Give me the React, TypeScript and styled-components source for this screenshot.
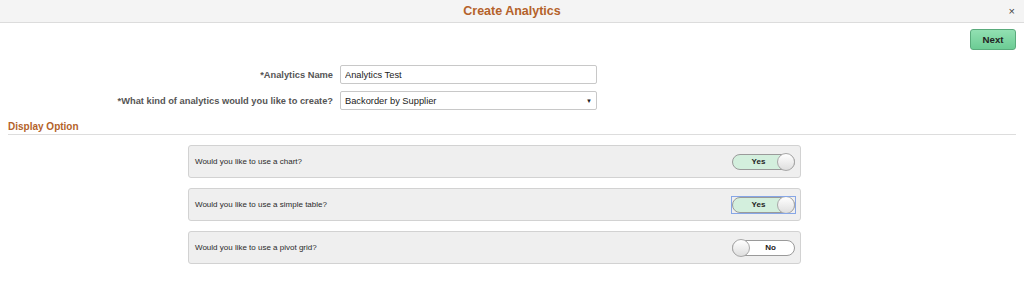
import React from 'react'
import styled, { createGlobalStyle } from 'styled-components'

const GlobalStyle = createGlobalStyle`
  body {
    margin: 0;
    background: #fff;
    font-family: "Liberation Sans", Arial, sans-serif;
    color: #333;
  }
`

interface Option {
  question: string
  on: boolean
  focused?: boolean
}

const options: Option[] = [
  { question: 'Would you like to use a chart?', on: true },
  { question: 'Would you like to use a simple table?', on: true, focused: true },
  { question: 'Would you like to use a pivot grid?', on: false },
]

export default function App() {
  return (
    <StyledRoot>
      <GlobalStyle />
      <StyledHeader>
        <span />
        <StyledTitle>Create Analytics</StyledTitle>
        <StyledClose>×</StyledClose>
      </StyledHeader>

      <StyledToolbar>
        <StyledNext>Next</StyledNext>
      </StyledToolbar>

      <StyledForm>
        <StyledLabel>*Analytics Name</StyledLabel>
        <StyledInput defaultValue="Analytics Test" />
        <StyledLabel>*What kind of analytics would you like to create?</StyledLabel>
        <StyledSelect>
          <span>Backorder by Supplier</span>
          <StyledCaret>▼</StyledCaret>
        </StyledSelect>
      </StyledForm>

      <StyledSection>Display Option</StyledSection>

      <StyledOptions>
        {options.map((o) => (
          <StyledOption key={o.question}>
            <span>{o.question}</span>
            <StyledFocus $focused={o.focused}>
              <StyledToggle $on={o.on}>
                <StyledToggleText $on={o.on}>{o.on ? 'Yes' : 'No'}</StyledToggleText>
                <StyledKnob />
              </StyledToggle>
            </StyledFocus>
          </StyledOption>
        ))}
      </StyledOptions>
    </StyledRoot>
  )
}

const StyledRoot = styled.div`
  width: 1024px;
  height: 288px;
  overflow: hidden;
`

const StyledHeader = styled.header`
  display: grid;
  grid-template-columns: 1fr auto 1fr;
  align-items: center;
  height: 22px;
  background: #f4f4f4;
  border-bottom: 1px solid #dcdcdc;
`

const StyledTitle = styled.h1`
  margin: 0;
  font-size: 12.5px;
  font-weight: bold;
  color: #b4622a;
`

const StyledClose = styled.span`
  justify-self: end;
  margin-right: 9px;
  font-size: 11px;
  color: #444;
`

const StyledToolbar = styled.div`
  display: flex;
  justify-content: flex-end;
  padding: 6px 8px 0;
`

const StyledNext = styled.button`
  width: 46px;
  height: 21px;
  padding: 0;
  border: 1px solid #5aab7c;
  border-radius: 3px;
  background: linear-gradient(#92e0b2, #6ccc94);
  font-family: inherit;
  font-size: 9.7px;
  font-weight: bold;
  color: #222;
`

const StyledForm = styled.div`
  display: grid;
  grid-template-columns: 333px 257px;
  grid-auto-rows: 19px;
  column-gap: 7px;
  row-gap: 7px;
  margin-top: 15px;
`

const StyledLabel = styled.label`
  align-self: center;
  text-align: right;
  font-size: 9.3px;
  font-weight: bold;
  color: #555;
`

const StyledInput = styled.input`
  box-sizing: border-box;
  height: 19px;
  margin: 0;
  padding: 0 4px;
  border: 1px solid #c8c8c8;
  border-radius: 2px;
  font-family: inherit;
  font-size: 9.3px;
  color: #222;
  outline: none;
`

const StyledSelect = styled.div`
  box-sizing: border-box;
  display: flex;
  align-items: center;
  justify-content: space-between;
  padding: 0 4px 0 4px;
  border: 1px solid #c8c8c8;
  border-radius: 2px;
  font-size: 9.3px;
  color: #222;
`

const StyledCaret = styled.span`
  font-size: 6px;
  color: #222;
`

const StyledSection = styled.h2`
  margin: 11px 8px 0;
  padding-bottom: 1px;
  border-bottom: 1px solid #dddddd;
  font-size: 10px;
  line-height: 12px;
  font-weight: bold;
  color: #b4622a;
`

const StyledOptions = styled.div`
  display: flex;
  flex-direction: column;
  gap: 10px;
  width: 613px;
  margin: 10px 0 0 188px;
`

const StyledOption = styled.div`
  box-sizing: border-box;
  display: flex;
  align-items: center;
  justify-content: space-between;
  height: 33px;
  padding: 0 5px 0 6px;
  background: #efefef;
  border: 1px solid #d2d2d2;
  border-radius: 3px;
  font-size: 8px;
  color: #2a2a2a;
`

const StyledFocus = styled.span<{ $focused?: boolean }>`
  display: flex;
  outline: ${(p) => (p.$focused ? '1px solid #86a6e6' : 'none')};
`

const StyledToggle = styled.div<{ $on: boolean }>`
  box-sizing: border-box;
  display: flex;
  flex-direction: ${(p) => (p.$on ? 'row' : 'row-reverse')};
  align-items: center;
  width: 63px;
  height: 16px;
  border: 1px solid #9a9a9a;
  border-radius: 9px;
  background: ${(p) => (p.$on ? '#d3efdd' : '#fff')};
`

const StyledToggleText = styled.span<{ $on: boolean }>`
  flex: 1;
  text-align: center;
  padding-left: ${(p) => (p.$on ? '6px' : '0')};
  padding-right: ${(p) => (p.$on ? '0' : '2px')};
  font-size: 8px;
  font-weight: bold;
  color: #222;
`

const StyledKnob = styled.span`
  box-sizing: border-box;
  width: 18px;
  height: 18px;
  margin: 0 -1px;
  border: 1px solid #a8a8a8;
  border-radius: 50%;
  background: linear-gradient(#ffffff, #dedede);
`
